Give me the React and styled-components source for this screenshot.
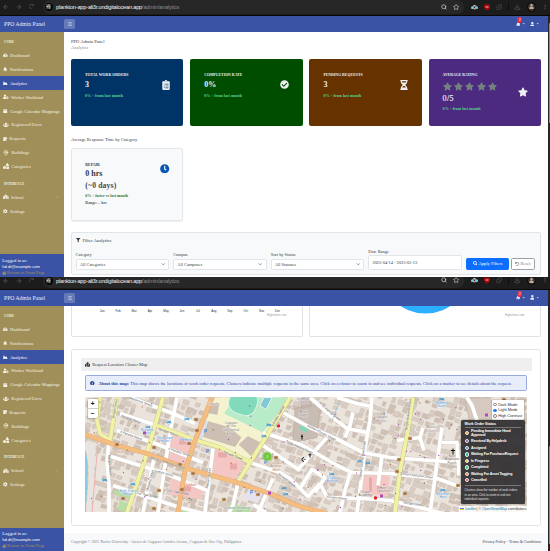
import React from "react";
import styled, { createGlobalStyle, css } from "styled-components";
import {
  FaArrowLeft, FaArrowRight, FaRedo, FaBars, FaBell, FaUser, FaTachometerAlt, FaChartArea, FaUserCog,
  FaCalendar, FaUsers, FaStickyNote, FaShapes, FaSchool, FaCog, FaHome, FaClipboardList, FaCheckCircle,
  FaHourglassHalf, FaStar, FaClock, FaFilter, FaSearch, FaUndo, FaMapMarked, FaInfoCircle, FaCaretDown,
} from "react-icons/fa";
import { Search, Star, Puzzle, Download, MapPin, ChevronDown, ChevronRight, EllipsisVertical, SlidersHorizontal } from "lucide-react";

const serif = '"Liberation Serif", serif';
const sans = '"Liberation Sans", sans-serif';

const Global = createGlobalStyle`
  * { box-sizing: border-box; }
  body { margin: 0; background: #fff; font-family: ${serif}; font-size: 4.6px; color: #343a40; }
  svg { display: block; flex: none; }
`;

const Page = styled.div`
  width: 550px; height: 551px; overflow: hidden; display: flex; flex-direction: column;
`;
const Screen = styled.section`
  height: ${(p) => p.$h}px; overflow: hidden; display: flex; flex-direction: column; flex: none;
  justify-content: flex-end;
`;

/* Browser bar */
const Chrome = styled.div`
  height: 16px; flex: none; display: flex; align-items: center; padding: 0 2px 1.4px 3px;
  background: #1c1c1c; border-bottom: 1px solid #080808; color: #5d5d5d;
`;
const NavIcons = styled.div`
  width: 40px; display: flex; gap: 7.4px; color: #4b4b4b;
`;
const Address = styled.div`
  width: 421px; height: 14px; border-radius: 7px; background: #272727; display: flex; align-items: center;
  font: 5.75px ${sans}; letter-spacing: -.26px; color: #8b8b8b; padding: 0 5px 0 1.5px; white-space: pre;
  b { font-weight: 400; color: #f1f1f1; }
`;
const SiteChip = styled.span`
  width: 8px; height: 8px; border-radius: 50%; background: #070707; color: #eee; margin-right: 3.6px;
  display: flex; align-items: center; justify-content: center;
`;
const AddressTools = styled.span`
  margin-left: auto; display: flex; gap: 5.4px; color: #c9c9c9;
`;
const Extensions = styled.div`
  flex: 1; display: flex; align-items: center; justify-content: space-between; padding-left: 7px;
`;
const Avatar = styled.span`
  width: 9.5px; height: 9.5px; border-radius: 50%; background: #3d3734; border: 1px solid #050505;
  display: flex; align-items: center; justify-content: center; color: #c6aa98;
`;
const Divider = styled.i`
  width: .7px; height: 7px; background: #0c0c0c;
`;

/* App frame */
const Frame = styled.div`
  flex: none; height: 261.3px; display: flex;
`;
const AppBody = styled.div`
  width: 548px; display: flex; flex-direction: column;
`;
const Scroll = styled.div`
  width: 2px; background: #252525; padding: ${(p) => p.$top}px 0 0 .8px;
  i { display: block; height: ${(p) => p.$len}px; background: #8d8d8d; border-radius: 1px; }
`;
const TopNav = styled.header`
  height: 16px; flex: none; background: #3a53a4; color: #e8ecfa; display: flex; align-items: center; padding: 0 8.3px 0 4px;
  font-size: 5.65px;
`;
const Brand = styled.span` width: 60px; `;
const Burger = styled.span`
  width: 11px; height: 10px; border-radius: 1.5px; background: #6579bb; display: flex; align-items: center; justify-content: center;
`;
const NavRight = styled.div`
  margin-left: auto; display: flex; align-items: center; gap: 2px;
`;
const BellWrap = styled.span` position: relative; `;
const Badge = styled.span`
  position: absolute; left: 1.7px; top: -4.5px; width: 5px; height: 6px; border-radius: 2px; background: #e52c45;
  font: 3.4px/6px ${sans}; text-align: center; color: #fff;
`;
const Columns = styled.div` flex: 1; display: flex; min-height: 0; `;
const Sidebar = styled.nav`
  width: 64px; flex: none; background: #a08f58; color: #fff; display: flex; flex-direction: column; font-size: 4.5px;
`;
const Heading = styled.div`
  height: ${(p) => p.$h}px; padding: ${(p) => p.$pt}px 0 0 4px; font-size: 3.5px; line-height: 4px; font-weight: 700; color: #f4efdc;
`;
const Item = styled.div`
  height: 13.85px; display: flex; align-items: center; padding: 0 5px 0 3.4px; gap: ${(p) => p.$gap || 2}px; white-space: nowrap;
  color: #f5f1e3;
  ${(p) => p.$active && css` background: #3a53a4; border-radius: 0 1px 1px 0; color: #fff; `}
`;
const Push = styled.span` margin-left: auto; opacity: .6; `;
const UserBox = styled.div`
  margin-top: auto; height: 23.3px; background: #3a53a4; padding: 3.5px 2.3px 0; line-height: 6.1px; white-space: nowrap;
  font-size: 4.5px; letter-spacing: .03px;
`;
const Email = styled.div` font-family: ${sans}; font-size: 4.1px; letter-spacing: 0; `;
const ReturnLink = styled.div`
  display: flex; align-items: center; color: #a8955b; gap: .3px; font-size: 4.4px; letter-spacing: .06px;
`;
const Main = styled.main`
  flex: 1; min-width: 0; padding: ${(p) => p.$pad}; display: flex; flex-direction: column; background: #fff;
`;

/* Analytics content */
const Title = styled.div` font-size: 4.6px; line-height: 6px; `;
const Crumb = styled.div` font-size: 4.5px; line-height: 6px; color: #858b91; margin-top: .5px; `;
const StatGrid = styled.div`
  display: grid; grid-template-columns: repeat(4, 112.4px); justify-content: space-between; margin-top: 7.5px;
`;
const StatCard = styled.article`
  height: 67.2px; border-radius: 2px; background: ${(p) => p.$bg}; color: #eef0f3; display: flex; align-items: flex-start;
  justify-content: space-between; padding: 14.5px 13px 0 14px;
`;
const StatLabel = styled.div` font-size: 3.85px; line-height: 5px; font-weight: 700; white-space: nowrap; `;
const StatValue = styled.div`
  font-size: 8px; line-height: 10px; font-weight: 700; margin-top: ${(p) => p.$mt || 1.6}px;
  ${(p) => p.$light && css` font-weight: 400; -webkit-text-stroke: .15px; letter-spacing: .3px; `}
`;
const Trend = styled.div`
  font-size: ${(p) => p.$size || 4.05}px; line-height: 5px; font-weight: 700; margin-top: ${(p) => p.$mt || 3.4}px; color: ${(p) => p.$c || "#58d68d"}; white-space: nowrap;
`;
const Stars = styled.div` display: flex; gap: 2.4px; color: #74807f; margin-top: 3.3px; `;
const StatIcon = styled.div` padding-top: ${(p) => p.$pt}px; width: 9.5px; display: flex; justify-content: center; `;
const SectionTitle = styled.h3`
  margin: 11.3px 0 5px; font-size: 4.47px; line-height: 6px; font-weight: 400;
`;
const ResponseCard = styled.article`
  width: 112.4px; height: 72.3px; border: .8px solid #e4e7ea; border-radius: 2.5px; background: #f8f9fb; padding: 13.6px 12.7px 0 13.3px;
  display: flex; justify-content: space-between; box-shadow: 0 .5px 1px #0001;
`;
const Days = styled.div` font-size: 7.7px; line-height: 11px; color: #454b51; font-weight: 700; letter-spacing: .14px; margin-top: .6px; `;
const Filters = styled.section`
  margin-top: 11.6px; height: 42.4px; border: 1px solid #e2e5e8; border-radius: 2px; background: #f8f9fb; padding: 4.5px 3.4px 0 3.6px;
`;
const FilterTitle = styled.div` display: flex; gap: 1.8px; align-items: center; font-size: 4.7px; line-height: 6px; height: 6px; padding-left: .6px; `;
const FilterRow = styled.div` display: flex; align-items: flex-end; height: 26px; `;
const Field = styled.label`
  width: 94px; margin-right: 4px; display: flex; flex-direction: column; font-size: 4.4px; line-height: 5.5px; gap: 1px;
`;
const Control = styled.span`
  height: ${(p) => p.$h || 10.8}px; border: .8px solid #e1e4e8; border-radius: 1.5px; background: #fff; padding: 0 3px 0 3.2px;
  display: flex; align-items: center; justify-content: space-between;
`;
const Button = styled.span`
  height: 12px; width: ${(p) => p.$w}px; border-radius: 1.5px; display: flex; align-items: center; justify-content: center; gap: 1.2px;
  font-size: 4.5px; margin-right: 2px; border: .8px solid ${(p) => (p.$primary ? "#0d6efd" : "#9aa0a6")};
  background: ${(p) => (p.$primary ? "#0d6efd" : "#fff")}; color: ${(p) => (p.$primary ? "#fff" : "#7a8086")}; white-space: nowrap;
`;

/* Charts and map */
const ChartRow = styled.div` display: flex; gap: 6.5px; height: 31.6px; flex: none; `;
const ChartPanel = styled.div`
  flex: 1; border: 1px solid #e1e3e6; border-top: 0; border-radius: 0 0 2px 2px; overflow: hidden;
`;
const MapCard = styled.section`
  margin-top: 11.5px; height: 177.5px; flex: none; border: 1px solid #e1e3e6; border-radius: 2.5px; padding: 8.7px 8.5px 0;
`;
const MapHead = styled.div`
  height: 12.4px; background: #efefef; display: flex; align-items: center; gap: 2px; padding-left: 4.5px; font-size: 4.5px;
`;
const Notice = styled.div`
  margin: 4px 4.1px 5.1px 4.3px; height: 16.6px; border: .8px solid #98a9dc; border-radius: 1.5px; background: #e8edfc; color: #34458f;
  display: flex; align-items: center; padding-left: 4.4px; gap: 3.6px; font-size: 4.46px; white-space: nowrap;
`;
const MapBox = styled.div`
  position: relative; margin: 0 4px 0 4.4px; height: 115px; overflow: hidden; font-family: ${sans};
`;
const ZoomBox = styled.div`
  position: absolute; left: 3px; top: 2.6px; width: 9.7px; background: #fff; border-radius: 1px; box-shadow: 0 0 0 .7px #0003;
  font: 700 6.5px/9px ${sans}; text-align: center; color: #111;
  div + div { border-top: .5px solid #ccc; }
`;
const ModeBox = styled.div`
  position: absolute; right: 3.4px; top: 3.5px; width: 32.5px; height: 20px; background: #fff; border-radius: 1px; box-shadow: 0 0 0 .5px #0003;
  padding: 1.5px 1.8px; font-size: 4.1px; letter-spacing: -.09px; line-height: 5.9px; color: #333; white-space: nowrap;
`;
const ModeRow = styled.div` display: flex; align-items: center; gap: 1px; `;
const Radio = styled.i`
  width: 3.8px; height: 3.8px; flex: none; border-radius: 50%; border: ${(p) => (p.$on ? "1px solid #1976e8" : ".4px solid #777")};
  background: ${(p) => (p.$on ? "#1976e8" : "#fff")};
`;
const Legend = styled.div`
  position: absolute; right: 2.9px; top: 23px; width: 64px; height: 84px; border-radius: 1.5px; background: rgba(52, 50, 52, .95); color: #fff;
  padding: 2.4px 4px 0; box-shadow: 0 0 2px #0008;
`;
const LegendTitle = styled.div` font-size: 3.75px; letter-spacing: -.1px; line-height: 5.5px; font-weight: 700; border-bottom: .5px solid #777; `;
const LegendRow = styled.div`
  display: flex; align-items: center; gap: 2px; height: ${(p) => p.$h || 6.45}px; font-size: 3.6px; letter-spacing: -.15px; line-height: 4.3px; font-weight: 700; white-space: pre;
`;
const Dot = styled.i`
  width: 4.4px; height: 4.4px; flex: none; border-radius: 50%; background: ${(p) => p.$c}; border: .7px solid #f1e9e9;
`;
const LegendNote = styled.div`
  border-top: .5px solid #777; margin-top: 1.6px; padding-top: 2.2px; font-size: 2.9px; line-height: 4.4px; color: #e0e0e0; white-space: pre;
`;
const Credit = styled.div`
  position: absolute; right: 0; bottom: 0; height: 5.2px; background: rgba(255,255,255,.82); display: flex; align-items: center; gap: 1px; font-size: 3.65px;
  letter-spacing: -.06px; padding: 0 1.3px; color: #333; white-space: pre;
  b { font-weight: 400; color: #0878a8; }
`;
const Footer = styled.footer`
  margin: 6.5px -7px 0; flex: 1; background: #f8f9fb; display: flex; justify-content: space-between; padding: 6.6px 7px 0; font-size: 3.87px; line-height: 6px;
  color: #767d84; white-space: nowrap;
`;
const FooterLinks = styled.span` color: #3d4146; font-size: 3.95px; `;

function BrowserBar() {
  return (
    <Chrome>
      <NavIcons><FaArrowLeft size={5.8} /><FaArrowRight size={5.8} /><FaRedo size={4.8} /></NavIcons>
      <Address>
        <SiteChip><SlidersHorizontal size={5} strokeWidth={3} /></SiteChip>
        <b>plankton-app-ali3r.ondigitalocean.app</b>/admin/analytics
        <AddressTools><Search size={6} strokeWidth={3} /><Star size={6.3} strokeWidth={2.6} /></AddressTools>
      </Address>
      <Extensions>
        <svg width="7" height="6" viewBox="0 0 14 12"><path d="M2 5Q7-1 12 5" fill="#ded0c9" /><rect x="0" y="5" width="6" height="5" rx="2" fill="#70cce0" /><rect x="8" y="5" width="6" height="5" rx="2" fill="#70cce0" /><path d="M5 8h4v3H5z" fill="#e19372" /></svg>
        <svg width="6" height="6.5" viewBox="0 0 12 13"><path d="M6 0 12 2V7Q11 11 6 13Q1 11 0 7V2Z" fill="#a90808" /><path d="M3 6h6" stroke="#fff" strokeWidth="1.5" /></svg>
        <Puzzle size={6.5} strokeWidth={2} />
        <Divider />
        <Download size={6.5} strokeWidth={2.3} />
        <Avatar><FaUser size={5} /></Avatar>
        <EllipsisVertical size={6} />
      </Extensions>
    </Chrome>
  );
}

const core = [
  ["Dashboard", FaTachometerAlt, 4.6, 2],
  ["Notifications", FaBell, 4.4, 2],
  ["Analytics", FaChartArea, 4.6, 1.9],
  ["Worker Workload", FaUserCog, 5.6, 2],
  ["Google Calendar Mappings", FaCalendar, 4.5, 2],
  ["Registered Users", FaUsers, 5.8, 2],
  ["Requests", FaStickyNote, 4.2, 1.6],
  ["Buildings", MapPin, 5.8, 2.2],
  ["Categories", FaShapes, 6, 2.1],
];

function Shell({ height, scrollTop, scrollLen, pad, children }) {
  return (
    <Screen $h={height}>
      <BrowserBar />
      <Frame>
        <AppBody>
          <TopNav>
            <Brand>PPO Admin Panel</Brand>
            <Burger><FaBars size={4} /></Burger>
            <NavRight>
              <BellWrap><FaBell size={4.6} /><Badge>2</Badge></BellWrap>
              <FaCaretDown size={3.4} />
              <i />
              <FaUser size={4.7} />
              <FaCaretDown size={3.4} />
            </NavRight>
          </TopNav>
          <Columns>
            <Sidebar>
              <Heading $h={16.8} $pt={8.1}>CORE</Heading>
              {core.map(([name, Icon, size, gap]) => (
                <Item key={name} $active={name === "Analytics"} $gap={gap}><Icon size={size} strokeWidth={name === "Buildings" ? 2.8 : undefined} />{name}</Item>
              ))}
              <Heading $h={16.9} $pt={8.3}>INTERFACE</Heading>
              <Item><FaSchool size={5.6} />School<Push><ChevronRight size={4} /></Push></Item>
              <Item><FaCog size={4.6} />Settings</Item>
              <UserBox>
                <div>Logged in as:</div>
                <Email>hd.dt@example.com</Email>
                <ReturnLink><FaHome size={4.4} />Return to Front Page</ReturnLink>
              </UserBox>
            </Sidebar>
            <Main $pad={pad}>{children}</Main>
          </Columns>
        </AppBody>
        <Scroll $top={scrollTop} $len={scrollLen}><i /></Scroll>
      </Frame>
    </Screen>
  );
}

function Stat({ bg, label, value, Icon, size = 9, stars }) {
  return (
    <StatCard $bg={bg}>
      <div>
        <StatLabel>{label}</StatLabel>
        {stars && <Stars>{[0, 1, 2, 3, 4].map((n) => <FaStar key={n} size={9} />)}</Stars>}
        <StatValue $light={stars} $mt={stars ? 3 : 1.6}>{value}</StatValue>
        <Trend $mt={stars ? 2.2 : 2.9}>0% ↑ from last month</Trend>
      </div>
      <StatIcon $pt={stars ? 13.8 : 7.2}><Icon size={size} /></StatIcon>
    </StatCard>
  );
}

/* City map, drawn in page coordinates */
const whiteRoads = [
  "M109 440 107 462 109 485 109 512", "M130 397 173 413 195 423", "M120 413 157 425", "M117 430 153 442 203 462",
  "M177 397 170 432 165 465 158 512", "M213 448 209 480 205 512", "M111 456 163 472 183 480 207 490",
  "M113 485 137 493 180 507 215 516", "M155 453 149 482 143 512", "M283 412 310 427 336 438 363 452 390 457 460 462",
  "M263 432 303 445 337 465 352 472 390 473 437 478 465 488", "M263 445 300 470 M250 462 280 472 290 478 308 496 320 483 M327 497 363 498 390 500 420 507 447 514",
  "M372 397 370 420 365 447 362 475 357 512", "M327 437 297 470 M320 483 327 497", "M310 397 333 417 347 428 367 432",
  "M337 397 357 403 372 406", "M353 412 350 425 345 437", "M350 473 345 490 340 512", "M238 482 233 505 229 512",
  "M300 488 312 469 325 477 315 492", "M467 397 472 405 477 420", "M397 440 420 437 423 427", "M442 427 438 455 434 485 430 512",
  "M442 442 457 442 459 475", "M273 478 258 512", "M253 504 266 512", "M382 455 378 485", "M420 437 424 450",
];
const yellowRoads = [
  "M100 397 97 420 100 433 110 440 117 397", "M163 397 147 453 127 512", "M157 425 197 440 220 447 250 462",
  "M290 397 267 435 250 462 236 484", "M413 397 407 435 400 470 395 512",
];
const orangeRoads = ["M85 434 117 445 147 453 187 468 237 482 270 493 297 505 327 513", "M212 397 195 440 185 470 178 512"];

const buildings = [];
let seed = 17;
const rnd = () => { seed = (seed * 1103515245 + 12345) % 2147483648; return seed / 2147483648; };
for (let row = -8; row < 36; row++) {
  for (let col = -2; col < 74; col++) {
    if (rnd() > 0.78) continue;
    buildings.push([80 + col * 6.6 + rnd() * 2, 330 + row * 6.6 + rnd() * 2, 3.2 + rnd() * 4, 3 + rnd() * 3.4, rnd()]);
  }
}
const markers = [];
for (let i = 0; i < 105; i++) markers.push([87 + rnd() * 436, 399 + rnd() * 110, ["#9b42a4", "#a56725", "#ad48b6", "#876a3d"][i % 4]]);
const labels = [
  ["Masterson Street", 129, 398, 20], ["Yacapin Street", 121, 416, 20], ["A Pacana Street", 120, 432, 20], ["Yacapin Street", 158, 429, 20],
  ["Mayor J. R. Borja Avenue", 150, 458, 17], ["Gomez Street", 154, 471, 15], ["Cruz Taal Street", 166, 490, 12], ["Cruz Taal Street", 135, 493, 12],
  ["Yacapin Street", 223, 452, 22], ["A Pacana Street", 168, 449, 18], ["Burgos Street", 108, 455, 85], ["Burgos Street", 114, 418, -80],
  ["Abejuela Street", 148, 491, -75], ["Pabayo Street", 208, 488, -82], ["Corrales Avenue", 273, 426, -60],
  ["Ramon Chavez Street", 307, 426, 27], ["Julio Pacana Street", 287, 442, 25], ["Yacapin Street", 278, 474, 38], ["Yacapin Street", 326, 497, 7],
  ["Capitan Vicente Roa Street", 361, 479, -83], ["J. Ramos Street", 322, 406, 40], ["Sergio Osmeña Street", 407, 430, -82], ["Zamora National Street", 400, 474, 7], ["Yacapin Street", 403, 503, 8],
];
const places = [
  ["Marigold\nHotel", 147, 430, "#438ed9"], ["North Town\nHostel", 165, 438, "#438ed9"], ["Cagayan\nde Oro\nCity Central\nSchool", 231, 423, "#79745c"],
  ["VIP Hotel", 185, 440, "#438ed9"], ["Eight Suites\nHostel", 128, 491, "#438ed9"], ["City\nAlliance\nChurch", 432, 424, "#8d8172"],
  ["Saint\nAugustine\nParish\nChurch", 452, 456, "#75634d"], ["D'Lalyn\nPension", 332, 478, "#438ed9"], ["Corrales\nAvenue\nHotel", 276, 463, "#ac804d"],
  ["Lutheran\nChurch", 303, 399, "#756587"], ["Austin\nTowers\nHotels", 304, 412, "#7d7272"], ["Xavier University\nGym", 239, 508, "#54815b"],
  ["DCLA\nCagayan\nde Oro", 381, 414, "#7d7272"], ["Mallberry\nSuites", 442, 403, "#438ed9"], ["Pearlmont\nHotel", 443, 494, "#438ed9"],
  ["Chowking", 118, 452, "#c38a50"], ["Jollibee", 191, 485, "#d65e53"], ["Chapel\nAcademy", 365, 492, "#6b6257"], ["Hotel\nConchita", 383, 488, "#6b6257"], ["Church", 213, 404, "#8b7b68"],
];

function CityMap() {
  return (
    <svg width="442" height="115" viewBox="85 396.5 442 115" preserveAspectRatio="none" fontFamily="Liberation Sans, sans-serif">
      <path d="M85 396H527V512H85Z" fill="#ebe4dc" />
      <g transform="rotate(18 300 450)">
        {buildings.map(([x, y, w, h, s], i) => (
          <path key={i} d={`M${x} ${y}h${w}v${h * 0.5}h${-w * 0.2 * s}v${h * 0.5}h${-w + w * 0.2 * s}z`} fill={s > 0.55 ? "#cfc1b6" : "#d9cdc3"} stroke="#c3b4a9" strokeWidth=".35" />
        ))}
      </g>
      <path d="M85 448C90 465 87 480 86 512H84V448Z" fill="#87cce3" />
      <path d="M85 446 96 442 91 512H86C88 485 91 465 85 448Z" fill="#e9e4df" />
      <path d="M98 442 92 512" stroke="#eda3a3" strokeWidth=".8" />
      <path d="M215 397H290L250 460 199 439Z" fill="#f5f3cf" />
      <path d="M224 413 235 397H290L263 432Z" fill="#b8ebc8" />
      <rect x="229" y="389" width="28" height="25" rx="10" transform="rotate(18 243 402)" fill="#81dabc" stroke="#d7f3dd" />
      <path d="M264 397H272L266 409 260 405Z" fill="#83c9d5" stroke="#fff" strokeWidth=".7" />
      <path d="M208 421 229 427 241 437 235 446 203 436Z M239 444 248 436 260 442 251 455Z M210 403 219 403 217 414 208 412Z" fill="#cebfb5" stroke="#b5a59b" strokeWidth=".4" />
      <path d="M202 418 208 421 202 440 195 435Z" fill="#dce0e8" />
      <path d="M176 431 194 440 183 467 163 460Z M216 447 245 463 234 480 210 472Z M171 477 204 488 201 499 169 494Z M365 472 390 476 388 496 362 493Z" fill="#f5c7c4" />
      <path d="M179 439h7v5h-7z M173 449h5v4h-5z M218 452h9v5h-9z M230 463h7v6h-7z M183 485h8v6h-8z M369 477h3v14h-3z M377 478h3v14h-3z" fill="#e7aaa7" />
      <path d="M295 408 321 402 317 437 293 442Z M302 398 312 397 311 406 301 408Z" fill="#c9bcb3" stroke="#b2a198" strokeWidth=".5" />
      <path d="M299 426 309 424 307 432 301 430Z" fill="#82d8ba" />
      <path d="M465 398 490 397 502 426 471 430Z" fill="#d7c9c0" stroke="#bbaaa1" strokeWidth=".5" />
      <path d="M120 500 129 503 127 512 117 509Z M181 505 189 508 187 512H180Z M115 489 132 495 131 499 113 493Z M229 502 251 508 249 512H230Z" fill="#b8dda5" />
      <path d="M252 483 265 488 258 503 243 498Z" fill="#e6e2ed" />
      {whiteRoads.map((d) => <path key={d} d={d} fill="none" stroke="#d5cdc7" strokeWidth="4.3" />)}
      {whiteRoads.map((d) => <path key={d} d={d} fill="none" stroke="#fff" strokeWidth="3.7" strokeLinejoin="round" />)}
      {yellowRoads.map((d) => <path key={d} d={d} fill="none" stroke="#c0c27f" strokeWidth="4.5" />)}
      {yellowRoads.map((d) => <path key={d} d={d} fill="none" stroke="#f1f2a5" strokeWidth="3.8" strokeLinejoin="round" />)}
      {orangeRoads.map((d) => <path key={d} d={d} fill="none" stroke="#d9a577" strokeWidth="4.8" />)}
      {orangeRoads.map((d) => <path key={d} d={d} fill="none" stroke="#f5bd80" strokeWidth="4" strokeLinejoin="round" />)}
      <path d="M340 400 332 420" stroke="#8fc4d4" strokeWidth="1" strokeDasharray="2 .7" />
      {markers.map(([x, y, c], i) => <circle key={i} cx={x} cy={y} r=".65" fill={c} />)}
      {[[117, 444], [154, 447], [196, 419], [197, 430], [189, 443], [180, 464], [193, 473], [159, 490], [182, 489], [224, 499], [123, 498], [154, 508], [276, 457], [258, 494], [410, 438], [399, 459], [397, 471], [405, 493], [458, 485], [504, 399]].map(([x, y]) => (
        <path key={`${x}-${y}`} d={`M${x - 1.8} ${y - 1.4}h3.6v2.8h-3.6z`} fill="#9b6d3f" stroke="#d6ad7b" strokeWidth=".5" />
      ))}
      {[[148, 426], [169, 421], [187, 418], [105, 479], [133, 483], [269, 424], [264, 435], [284, 487], [286, 493], [332, 473], [360, 460], [368, 462], [442, 398], [443, 489]].map(([x, y]) => (
        <path key={`${x}+${y}`} d={`M${x - 2} ${y - 1}v3m0-1h4v1m0-2h-3`} fill="none" stroke="#3a9bd2" strokeWidth=".8" />
      ))}
      {labels.map(([t, x, y, a], i) => (
        <text key={i} x={x} y={y} fontSize="3.2" transform={`rotate(${a} ${x} ${y})`} fill="#444" stroke="#fff" strokeWidth=".25" paintOrder="stroke">{t}</text>
      ))}
      {places.map(([t, x, y, c]) => t.split("\n").map((line, i) => (
        <text key={t + i} x={x} y={y + i * 3.7} fontSize="3.1" fill={c} textAnchor="middle" stroke="#fff" strokeWidth=".3" paintOrder="stroke">{line}</text>
      )))}
      {[[205, 432], [207, 452], [251, 493], [265, 463]].map(([x, y]) => <text key={x} x={x - 1} y={y} fontSize="4.5" fontWeight="700" fill="#2783d2">P</text>)}
      <path d="M310 457v-4M308.5 454.3h3M302 434v5M301 436h2M453 448v6M451 450h4" stroke="#111" strokeWidth="1" />
      <path d="M304 457a2 2 0 1 0 0 4" fill="none" stroke="#111" strokeWidth=".9" /><circle cx="305" cy="459" r=".6" />
      <circle cx="278.5" cy="425.5" r="1.6" fill="#df1f2b" /><circle cx="375.5" cy="497.5" r="1.7" fill="#df1f2b" />
      <path d="M143 431h3v3h-3z M485 413h3v3h-3z M268 491h3v3h-3z M380 494h3v3h-3z" fill="#b04ab4" />
      <circle cx="267.2" cy="456" r="5" fill="#8bd35d" fillOpacity=".75" /><circle cx="267.2" cy="456" r="3.8" fill="#70c73d" />
      <text x="267.2" y="457.3" fontSize="3.5" textAnchor="middle" fill="#e9ffe0">3</text>
    </svg>
  );
}

const legend = [
  ["Pending Immediate Head\nApproval", "#f39c12", 9], ["Received By Helpdesk", "#8e44ad", 7.4], ["Assigned", "#2d8de0"],
  ["Waiting For PurchaseRequest", "#16b590"], ["In Progress", "#f1bd0f"], ["Completed", "#2ecc71"], ["Waiting For Asset Tagging", "#e67e22"], ["Cancelled", "#e74c3c"],
];
const months = ["Jan", "Feb", "Mar", "Apr", "May", "Jun", "Jul", "Aug", "Sep", "Oct", "Nov", "Dec"];

export default function App() {
  return (
    <Page>
      <Global />
      <Shell height={277.3} scrollTop={6.5} scrollLen={100} pad="6.8px 7px 0">
        <Title>PPO Admin Panel</Title>
        <Crumb>Analytics</Crumb>
        <StatGrid>
          <Stat bg="#003366" label="TOTAL WORK ORDERS" value="3" Icon={FaClipboardList} size={10} />
          <Stat bg="#004d00" label="COMPLETION RATE" value="0%" Icon={FaCheckCircle} />
          <Stat bg="#663300" label="PENDING REQUESTS" value="3" Icon={FaHourglassHalf} size={10} />
          <Stat bg="#4b2a80" label="AVERAGE RATING" value="0/5" Icon={FaStar} size={10} stars />
        </StatGrid>
        <SectionTitle>Average Response Time by Category</SectionTitle>
        <ResponseCard>
          <div>
            <StatLabel>REPAIR</StatLabel>
            <StatValue $mt={1.6}>0 hrs</StatValue>
            <Days>(~0 days)</Days>
            <Trend $c="#2d7435" $mt={1.7} $size={3.95}>0% ↑ faster vs last month</Trend>
            <Trend $c="#555b61" $mt={2.2} $size={3.95}>Range: – hrs</Trend>
          </div>
          <StatIcon $pt={1}><FaClock size={9.4} color="#0656b3" /></StatIcon>
        </ResponseCard>
        <Filters>
          <FilterTitle><FaFilter size={4.4} />Filter Analytics</FilterTitle>
          <FilterRow>
            {[["Category", "All Categories"], ["Campus", "All Campuses"], ["Sort by Status", "All Statuses"]].map(([label, value]) => (
              <Field key={label}>{label}<Control>{value}<ChevronDown size={4.5} strokeWidth={3} /></Control></Field>
            ))}
            <Field>Date Range<Control $h={14.4}>2025-04-14 - 2025-05-13</Control></Field>
            <Button $primary $w={43.7}><FaSearch size={4.6} />Apply Filters</Button>
            <Button $w={23.4}><FaUndo size={4} />Reset</Button>
          </FilterRow>
        </Filters>
      </Shell>
      <Shell height={273.7} scrollTop={156.5} scrollLen={98} pad="0 7px">
        <ChartRow>
          <ChartPanel>
            <svg width="230" height="31" fontFamily="Liberation Sans, sans-serif" fontSize="3">
              {months.map((m, i) => <text key={m} x={30.2 + i * 15.95} y="6.4" textAnchor="middle" fill="#333">{m}</text>)}
              <text x="195" y="10.4" fontSize="2.8" fill="#999">Highcharts.com</text>
            </svg>
          </ChartPanel>
          <ChartPanel>
            <svg width="230" height="31" fontFamily="Liberation Sans, sans-serif">
              <circle cx="115.5" cy="-37" r="44.6" fill="#2caffe" />
              <text x="195" y="10.4" fontSize="2.8" fill="#999">Highcharts.com</text>
            </svg>
          </ChartPanel>
        </ChartRow>
        <MapCard>
          <MapHead><FaMapMarked size={5.2} />Request Location Cluster Map</MapHead>
          <Notice>
            <FaInfoCircle size={4.6} />
            <span><b>About this map:</b> This map shows the locations of work order requests. Clusters indicate multiple requests in the same area. Click on a cluster to zoom in and see individual requests. Click on a marker to see details about the request.</span>
          </Notice>
          <MapBox>
            <CityMap />
            <ZoomBox><div>+</div><div>−</div></ZoomBox>
            <ModeBox>
              <ModeRow><Radio />Dark Mode</ModeRow>
              <ModeRow><Radio $on />Light Mode</ModeRow>
              <ModeRow><Radio />High Contrast</ModeRow>
            </ModeBox>
            <Legend>
              <LegendTitle>Work Order Status</LegendTitle>
              {legend.map(([name, c, h]) => <LegendRow key={name} $h={h}><Dot $c={c} />{name}</LegendRow>)}
              <LegendNote>{"Clusters show the number of work orders\nin an area. Click to zoom in and see\nindividual requests."}</LegendNote>
            </Legend>
            <Credit>
              <svg width="4" height="2.6" viewBox="0 0 4 2.6"><path d="M0 0h4v1.3H0z" fill="#4c7be1" /><path d="M0 1.3h4v1.3H0z" fill="#ffd500" /></svg>
              <span><b>Leaflet</b> | © <b>OpenStreetMap</b> contributors</span>
            </Credit>
          </MapBox>
        </MapCard>
        <Footer>
          <span>Copyright © 2025 Xavier University - Ateneo de Cagayan Corrales Avenue, Cagayan de Oro City, Philippines</span>
          <FooterLinks>Privacy Policy · Terms &amp; Conditions</FooterLinks>
        </Footer>
      </Shell>
    </Page>
  );
}
